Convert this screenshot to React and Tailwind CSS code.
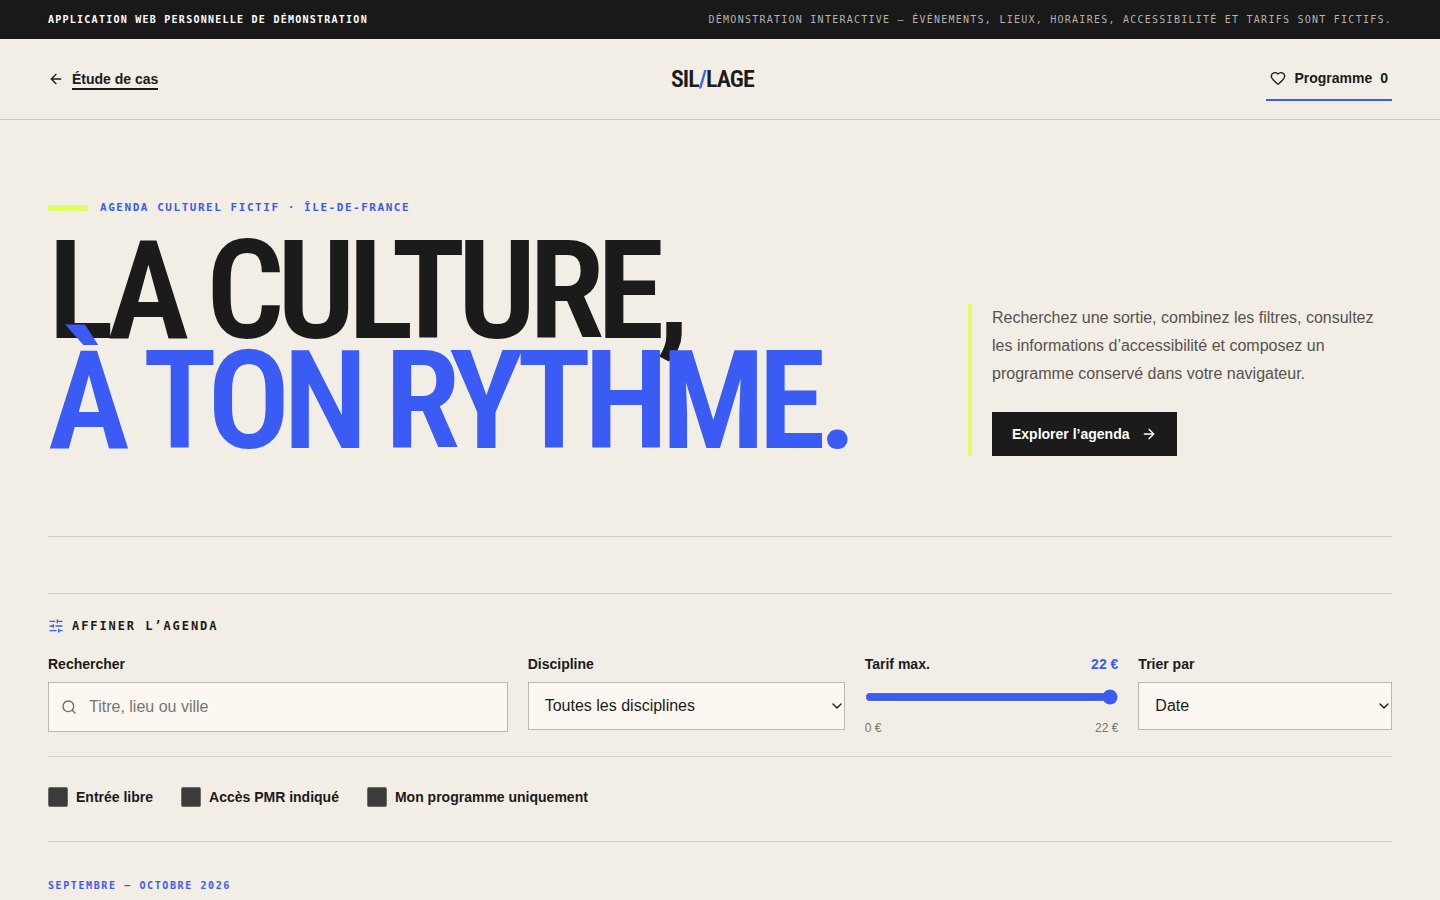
import React, { useState } from 'react'
import { ArrowLeft, ArrowRight, ChevronDown, Heart, Search, SlidersHorizontal } from 'lucide-react'

const DISCIPLINES = ['Toutes les disciplines', 'Musique', 'Théâtre', 'Danse', 'Exposition', 'Cinéma']
const SORTS = ['Date', 'Tarif', 'Ville']
const MAX_PRICE = 22

const TopBar = () => (
    <div className="flex h-[39px] items-center justify-between bg-[#191919] px-12 font-['DejaVu_Sans_Mono',monospace] text-[10px] tracking-[0.125em] uppercase">
        <strong className="font-bold text-white">Application web personnelle de démonstration</strong>
        <span className="text-[#b5b3af]">
            Démonstration interactive — événements, lieux, horaires, accessibilité et tarifs sont fictifs.
        </span>
    </div>
)

const Header = ({ count }) => (
    <header className="flex h-[81px] items-center justify-between border-b border-[#c9c6bf] px-12">
        <a href="#etude" className="flex items-center gap-2 text-sm font-bold">
            <ArrowLeft size={16} strokeWidth={2} />
            <span className="border-b-2 border-[#1b1b1b] pt-0.5 leading-[18px]">Étude de cas</span>
        </a>
        <a
            href="#accueil"
            aria-label="Sillage"
            className="font-['Roboto_Condensed','Arial_Narrow',sans-serif] text-2xl font-semibold tracking-[-0.04em]"
        >
            SIL<span className="text-[#3a5cf5]">/</span>LAGE
        </a>
        <button type="button" className="flex h-11 items-center gap-2 border-b-2 border-[#3a5cf5] px-1 text-sm font-bold">
            <Heart size={16} strokeWidth={2} />
            <span>Programme</span>
            <span>{count}</span>
        </button>
    </header>
)

const Hero = () => (
    <section className="grid grid-cols-[minmax(0,1fr)_424px] items-end border-b border-[#cfccc5] py-20">
        <div>
            <p className="mb-5 flex h-4 items-center gap-3 font-['DejaVu_Sans_Mono',monospace] text-[11px] font-bold tracking-[0.14em] text-[#3a5cf5] uppercase">
                <span className="h-1.5 w-10 bg-[#e0ff67]" />
                Agenda culturel fictif · Île-de-France
            </p>
            <h1 className="font-['Roboto_Condensed','Arial_Narrow',sans-serif] text-[138px] leading-[110px] font-semibold tracking-[-0.055em] whitespace-nowrap uppercase">
                La culture,
                <span className="block text-[#3a5cf5]">à ton rythme.</span>
            </h1>
        </div>
        <div className="border-l-4 border-[#e0ff67] pl-5">
            <p className="mb-6 text-base leading-7 text-[#56534f]">
                Recherchez une sortie, combinez les filtres, consultez les informations d’accessibilité et composez un
                programme conservé dans votre navigateur.
            </p>
            <a href="#agenda" className="inline-flex h-11 items-center gap-3 bg-[#1b1b1b] px-5 align-top text-sm font-bold text-white">
                Explorer l’agenda
                <ArrowRight size={16} strokeWidth={2} />
            </a>
        </div>
    </section>
)

const Select = ({ id, label, options }) => (
    <div className="flex flex-col gap-2">
        <label htmlFor={id} className="text-sm leading-5 font-bold">{label}</label>
        <div className="relative">
            <select id={id} className="block h-12 w-full appearance-none border border-[#bbb8b1] bg-[#fcf8f1] px-4 text-base">
                {options.map((option) => (
                    <option key={option}>{option}</option>
                ))}
            </select>
            <ChevronDown size={16} className="pointer-events-none absolute top-4 right-0" />
        </div>
    </div>
)

const Check = ({ label, checked, onChange }) => (
    <label className="flex items-center gap-2 text-sm font-bold">
        <input
            type="checkbox"
            checked={checked}
            onChange={(e) => onChange(e.target.checked)}
            className="size-5 appearance-none rounded-xs border border-[#6b6b6a] bg-[#3b3b3b] checked:bg-[#3a5cf5]"
        />
        {label}
    </label>
)

const Filters = () => {
    const [price, setPrice] = useState(MAX_PRICE)
    const [free, setFree] = useState(false)
    const [accessible, setAccessible] = useState(false)
    const [mine, setMine] = useState(false)

    return (
        <section className="mt-14 border-y border-[#cfccc5]">
            <h2 className="flex items-center gap-2 pt-6 pb-5 font-['DejaVu_Sans_Mono',monospace] text-xs font-bold tracking-[0.16em] uppercase">
                <SlidersHorizontal size={16} strokeWidth={2} className="text-[#3a5cf5]" />
                Affiner l’agenda
            </h2>

            <div className="grid grid-cols-[1.45fr_1fr_0.8fr_0.8fr] gap-5 border-b border-[#d6d2cb] pb-5">
                <div className="flex flex-col gap-2">
                    <label htmlFor="search" className="text-sm leading-5 font-bold">Rechercher</label>
                    <div className="flex h-[50px] items-center border border-[#bbb8b1] bg-[#fcf8f1] pl-3">
                        <Search size={16} strokeWidth={2} className="text-[#6b6864]" />
                        <input
                            id="search"
                            type="search"
                            placeholder="Titre, lieu ou ville"
                            className="h-full min-w-0 flex-1 bg-transparent px-3 text-base outline-none placeholder:text-[#757575]"
                        />
                    </div>
                </div>

                <Select id="discipline" label="Discipline" options={DISCIPLINES} />

                <div className="flex flex-col">
                    <div className="flex justify-between text-sm leading-5 font-bold">
                        <label htmlFor="price">Tarif max.</label>
                        <output htmlFor="price" className="text-[#3a5cf5]">{price} €</output>
                    </div>
                    <input
                        id="price"
                        type="range"
                        min="0"
                        max={MAX_PRICE}
                        value={price}
                        onChange={(e) => setPrice(Number(e.target.value))}
                        className="my-[15px] h-4 w-full accent-[#3a5cf5]"
                    />
                    <div className="flex justify-between text-xs text-[#77746f]">
                        <span>0 €</span>
                        <span>{MAX_PRICE} €</span>
                    </div>
                </div>

                <Select id="sort" label="Trier par" options={SORTS} />
            </div>

            <div className="flex items-center gap-7 pt-[30px] pb-[34px]">
                <Check label="Entrée libre" checked={free} onChange={setFree} />
                <Check label="Accès PMR indiqué" checked={accessible} onChange={setAccessible} />
                <Check label="Mon programme uniquement" checked={mine} onChange={setMine} />
            </div>
        </section>
    )
}

const App = () => (
    <div className="min-h-screen bg-[#f2ede5] font-['Liberation_Sans',Arial,sans-serif] text-[#1b1b1b]">
        <TopBar />
        <Header count={0} />
        <main className="px-12">
            <Hero />
            <Filters />
            <section id="agenda" className="pt-9">
                <p className="font-['DejaVu_Sans_Mono',monospace] text-[10px] leading-4 font-bold tracking-[0.16em] text-[#3a5cf5] uppercase">
                    Septembre — octobre 2026
                </p>
            </section>
        </main>
    </div>
)

export default App
